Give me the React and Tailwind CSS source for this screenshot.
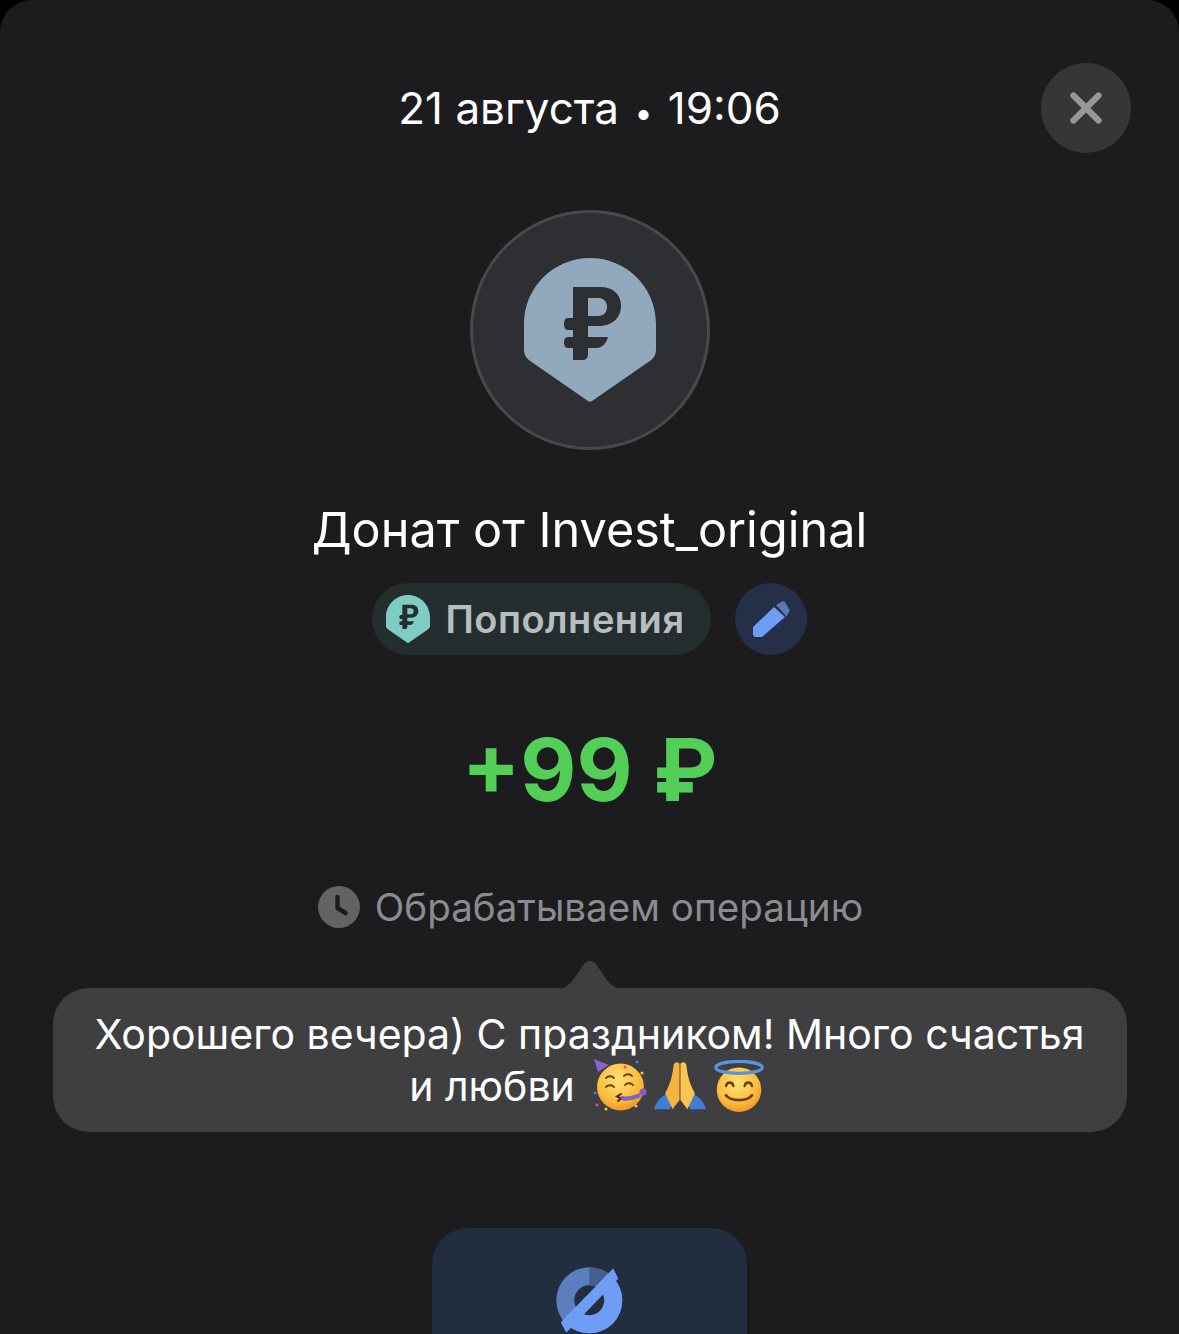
import { X } from 'lucide-react';

const font = { sans: "font-['Inter','Noto_Sans',sans-serif]" };

// Щит с рублём, используется в аватаре и в чипе категории
function RubleBadge({ className, fill, mark }) {
  return (
    <svg viewBox="0 0 132 144" className={className}>
      <path
        d="M0 66C0 29.500 29.500 0 66 0s66 29.500 66 66v26c0 4.500-2 8-5.500 10.500L68 143a3.500 3.500 0 0 1-4 0L5.500 102.500C2 100 0 96.500 0 92z"
        fill={fill}
      />
      <path
        fillRule="evenodd"
        d="M49 29H76c14 0 21 8 21 19s-8 20-22 20H64v11h20c-2 7-6 11-12 11H64v6c0 4-2 6-6 6H49V90H44c-3 0-4-3-4-5.500s1-5.500 4-5.500h5V72H44c-3 0-4-3-4-6s1-6 4-6h5zM64 40V58H74c6 0 9-4 9-9s-3-9-9-9z"
        fill={mark}
      />
    </svg>
  );
}

function Pencil() {
  return (
    <svg viewBox="0 0 38 38" className="h-[38px] w-[38px]">
      <path d="M24 5 30 1.500c1-.5 2-.5 3 .5l4 7c1 1 .5 2 0 3l-2.500 4.500z" fill="#5d78b4" />
      <path d="M1 27 22 7 33 17 10 37H4c-2 0-3-1-3-3z" fill="#6f9cf5" />
    </svg>
  );
}

function Clock() {
  return (
    <svg viewBox="0 0 42 42" className="h-[42px] w-[42px]">
      <circle cx="21" cy="21" r="21" fill="#636366" />
      <path d="M19.500 11v11l8 5" fill="none" stroke="#1c1c1e" strokeWidth="4.500" strokeLinecap="round" strokeLinejoin="round" />
    </svg>
  );
}

function PartyFace() {
  return (
    <svg viewBox="0 0 54 54" className="h-[54px] w-[54px]">
      <defs>
        <radialGradient id="partyFill" cx="45%" cy="35%" r="70%">
          <stop offset="0" stopColor="#ffe27a" />
          <stop offset="0.65" stopColor="#fbbd3c" />
          <stop offset="1" stopColor="#ee8f22" />
        </radialGradient>
      </defs>
      <circle cx="27.500" cy="28" r="23.500" fill="url(#partyFill)" />
      <path d="M1 0 5 13 16 6z" fill="#8a63c9" />
      <path d="M13 19c2-2.500 6-2.500 8 0M31 17c2-2.500 6-2.500 8 0M13 28c2-2.500 6-2.500 8 0M32 26c2-2.500 6-2.500 8 0" fill="none" stroke="#6b3d0f" strokeWidth="2" strokeLinecap="round" />
      <path d="M28 35l-4 2.500 4 2-3 2.500" fill="none" stroke="#4a2a12" strokeWidth="2" strokeLinecap="round" />
      <path d="M28 37c6 1 12 0 19-3l1 4c-6 2-13 5-20 3z" fill="#7e63c4" />
      <circle cx="50" cy="33" r="3.500" fill="#7e63c4" />
      <circle cx="32" cy="8" r="1.500" fill="#e8536b" />
      <circle cx="44" cy="3" r="1.500" fill="#4d7fe0" />
      <circle cx="49" cy="14" r="1.500" fill="#f6c945" />
      <circle cx="2" cy="34" r="1.500" fill="#4d7fe0" />
      <circle cx="4" cy="46" r="1.500" fill="#d9558f" />
      <circle cx="13" cy="50" r="1.500" fill="#f6c945" />
      <circle cx="43" cy="47" r="1.500" fill="#f6c945" />
    </svg>
  );
}

function PrayingHands() {
  return (
    <svg viewBox="0 0 56 56" className="h-[52px] w-[56px]">
      <path d="M0 53c2-8 7-13 14-17l6 9-3 8zM56 53c-2-8-7-13-14-17l-6 9 3 8z" fill="#3f7ed8" />
      <path d="M27.500 4c-3-3-6-1-6.500 2-1 10-3 19-9 30l8 17 7.500-10z" fill="#f7b33f" />
      <path d="M28.500 4c3-3 6-1 6.500 2 1 10 3 19 9 30l-8 17-7.500-10z" fill="#fbc552" />
    </svg>
  );
}

function HaloFace() {
  return (
    <svg viewBox="0 0 56 56" className="h-[52px] w-[52px]">
      <defs>
        <radialGradient id="haloFill" cx="45%" cy="35%" r="70%">
          <stop offset="0" stopColor="#ffe27a" />
          <stop offset="0.65" stopColor="#fbbd3c" />
          <stop offset="1" stopColor="#ee8f22" />
        </radialGradient>
      </defs>
      <circle cx="28" cy="32" r="24" fill="url(#haloFill)" />
      <ellipse cx="28" cy="8" rx="25" ry="6.500" fill="none" stroke="#5b93dc" strokeWidth="3.500" />
      <path d="M14 28c1-5 7-5 8 0M34 28c1-5 7-5 8 0" fill="none" stroke="#6b3d0f" strokeWidth="2.500" strokeLinecap="round" />
      <path d="M14 38c5 7 23 7 28 0" fill="none" stroke="#6b3d0f" strokeWidth="3" strokeLinecap="round" />
    </svg>
  );
}

// Значок «скрыть из аналитики»: кольцевая диаграмма с диагональю
function HiddenChart() {
  const ring = 'M33.300 .3a33 33 0 1 0 0 66 33 33 0 0 0 0-66zm0 18a15 15 0 1 1 0 30 15 15 0 0 1 0-30z';
  return (
    <svg viewBox="0 0 67 67" className="h-[67px] w-[67px]">
      <defs>
        <clipPath id="ringLower">
          <polygon points="57,2 80,2 80,80 5,80 5,55" />
        </clipPath>
      </defs>
      <path fillRule="evenodd" d={ring} fill="#5b7fbd" />
      <path d="M33.300 .3A33 33 0 0 1 56.600 10L44 22.600A15 15 0 0 0 33.300 18.300z" fill="#44608f" />
      <path fillRule="evenodd" d={ring} fill="#6f9cf5" clipPath="url(#ringLower)" />
      <polygon points="57,3 61,11.500 10.500,64 6,55.500" fill="#6f9cf5" stroke="#6f9cf5" strokeWidth="2" strokeLinejoin="round" />
    </svg>
  );
}

export default function App() {
  return (
    <div className={`h-[1334px] w-full overflow-hidden bg-black ${font.sans}`}>
      <div className="flex h-full flex-col items-center rounded-t-[32px] bg-[#1c1c1e] pt-[63px]">
        {/* шапка */}
        <div className="grid h-[90px] w-full shrink-0 grid-cols-[1fr_auto_1fr] items-center px-[48px]">
          <div />
          <p className="text-[44px] leading-[90px] text-white">
            21 августа <span className="mx-[3px] text-[32px] leading-none">•</span> 19:06
          </p>
          <button className="flex h-[90px] w-[90px] items-center justify-center justify-self-end rounded-full bg-[#363638]">
            <X className="h-[50px] w-[50px] text-[#98989b]" strokeWidth={3} />
          </button>
        </div>

        <div className="mt-[57px] flex h-[240px] w-[240px] shrink-0 items-center justify-center rounded-full border-[3px] border-[#48494d] bg-[#2e2f33]">
          <RubleBadge className="h-[144px] w-[132px]" fill="#92a9bd" mark="#2e2f33" />
        </div>

        <h1 className="mt-[50px] text-[48.600px] leading-[60px] text-white">Донат от Invest_original</h1>

        <div className="mt-[23px] flex shrink-0 items-center gap-[24px]">
          <div className="flex h-[72px] items-center gap-[15px] rounded-full bg-[#252e2f] pr-[26px] pl-[14px]">
            <RubleBadge className="h-[48px] w-[44px]" fill="#7fcdc2" mark="#252e2f" />
            <span className="text-[38px] font-semibold tracking-[0.5px] text-[#b8bdbf]">Пополнения</span>
          </div>
          <button className="flex h-[72px] w-[72px] items-center justify-center rounded-full bg-[#252f47]">
            <Pencil />
          </button>
        </div>

        <p className="mt-[60px] text-[86.500px] leading-[110px] font-bold text-[#53cf58]">+99 ₽</p>

        <div className="mt-[59px] flex shrink-0 items-center gap-[15px] pl-[2px]">
          <Clock />
          <span className="text-[38.600px] leading-[46px] text-[#8b8b90]">Обрабатываем операцию</span>
        </div>

        {/* комментарий к операции */}
        <div className="relative mt-[58px] w-[1074px] shrink-0 rounded-[36px] bg-[#3f3f41] px-[24px] py-[20px] text-center text-[41px] leading-[52px] text-white">
          <svg viewBox="0 0 70 31" className="absolute -top-[30px] left-[502px] h-[31px] w-[70px]">
            <path d="M0 31c8 0 12-2 18-9L29 6c3-4 9-4 12 0l11 16c6 7 10 9 18 9z" fill="#3f3f41" />
          </svg>
          <p>Хорошего вечера) С праздником! Много счастья</p>
          <p className="flex h-[52px] items-center justify-center gap-[5px] pr-[5px]">
            <span className="mr-[13px]">и любви</span>
            <PartyFace />
            <PrayingHands />
            <HaloFace />
          </p>
        </div>

        <button className="mt-[96px] flex h-[200px] w-[315px] shrink-0 justify-center rounded-[36px] bg-[#232d40] pt-[39px]">
          <HiddenChart />
        </button>
      </div>
    </div>
  );
}
